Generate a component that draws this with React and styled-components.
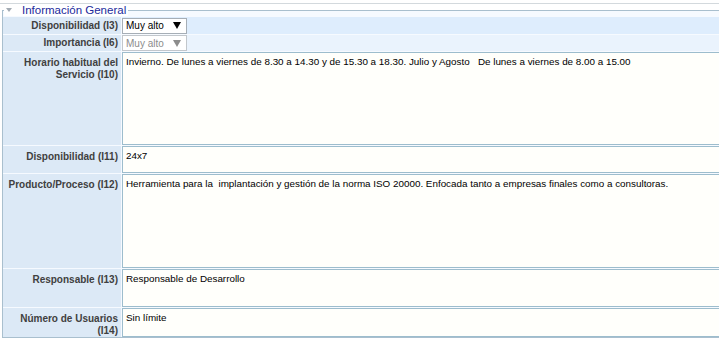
import React from 'react';
import styled, { createGlobalStyle } from 'styled-components';

const GlobalStyle = createGlobalStyle`
  html, body {
    margin: 0;
    padding: 0;
    background: #fff;
    overflow: hidden;
  }
  body {
    font-family: "Liberation Sans", Arial, sans-serif;
  }
`;

const Page = styled.div`
  width: 800px;
  margin-top: 3px;
  border-top: 1px solid #d3d9dd;
`;

const Fieldset = styled.fieldset`
  margin: 0 0 0 2px;
  padding: 1px 0 0 0;
  border: 1px solid #a9bfce;
  background: #f6faff;
  min-width: 0;
`;

const Legend = styled.legend`
  margin-left: 1px;
  padding: 0 2px;
  font-size: 11.5px;
  line-height: 12px;
  color: #1c2a9c;
  background: #fff;
`;

const Caret = styled.span`
  display: inline-block;
  width: 0;
  height: 0;
  border-left: 3px solid transparent;
  border-right: 3px solid transparent;
  border-top: 4px solid #a3abb3;
  margin: 0 10px 1px 0;
  vertical-align: middle;
`;

const Form = styled.div`
  display: grid;
  grid-template-columns: 118px 1fr;
  column-gap: 1px;
  row-gap: 1px;
`;

const Label = styled.div`
  background: #dce9f6;
  color: #404040;
  font-weight: bold;
  font-size: 10px;
  line-height: 12px;
  text-align: right;
  padding: ${(p) => (p.$center ? '0 3px' : '5px 3px 0 3px')};
  display: flex;
  flex-direction: column;
  justify-content: ${(p) => (p.$center ? 'center' : 'flex-start')};
`;

const Cell = styled.div`
  background: ${(p) => p.$bg || 'transparent'};
  height: ${(p) => p.$h}px;
  display: flex;
  align-items: center;
`;

const Select = styled.div`
  box-sizing: border-box;
  width: 65px;
  height: 16px;
  border: 1px solid ${(p) => (p.$disabled ? '#c2c7cc' : '#a6aeb6')};
  background: #fff;
  display: flex;
  align-items: center;
  justify-content: space-between;
  padding: 0 5px 0 3px;
  font-size: 10px;
  color: ${(p) => (p.$disabled ? '#8c8c8c' : '#000')};
`;

const Field = styled.textarea`
  display: block;
  box-sizing: border-box;
  width: 100%;
  height: ${(p) => p.$h}px;
  margin: 0;
  border: 1px solid #9dbdcd;
  border-radius: 0;
  background: #fffffb;
  font-family: "Liberation Sans", Arial, sans-serif;
  font-size: 9.85px;
  line-height: 13px;
  padding: 2px 3px;
  color: #000;
  resize: none;
  overflow: hidden;
  outline: none;
`;

const Arrow = ({ color }) => (
  <svg width="8" height="7" viewBox="0 0 8 7">
    <path d="M0 0 H8 L4 7 Z" fill={color} />
  </svg>
);

const fields = [
  {
    label: 'Horario habitual del Servicio (I10)',
    h: 93,
    value:
      'Invierno. De lunes a viernes de 8.30 a 14.30 y de 15.30 a 18.30. Julio y Agosto   De lunes a viernes de 8.00 a 15.00',
  },
  { label: 'Disponibilidad (I11)', h: 27, value: '24x7' },
  {
    label: 'Producto/Proceso (I12)',
    h: 94,
    value:
      'Herramienta para la  implantación y gestión de la norma ISO 20000. Enfocada tanto a empresas finales como a consultoras.',
  },
  { label: 'Responsable (I13)', h: 38, value: 'Responsable de Desarrollo' },
  { label: 'Número de Usuarios (I14)', h: 29, value: 'Sin límite' },
];

export default function App() {
  return (
    <>
      <GlobalStyle />
      <Page>
        <Fieldset>
          <Legend>
            <Caret />
            Información General
          </Legend>
          <Form>
            <Label $center>Disponibilidad (I3)</Label>
            <Cell $bg="#deedfd" $h={17}>
              <Select>
                Muy alto
                <Arrow color="#000" />
              </Select>
            </Cell>
            <Label $center>Importancia (I6)</Label>
            <Cell $bg="#eaf3fd" $h={16}>
              <Select $disabled>
                Muy alto
                <Arrow color="#8c8c8c" />
              </Select>
            </Cell>
            {fields.map((f) => (
              <React.Fragment key={f.label}>
                <Label>{f.label}</Label>
                <Field $h={f.h} readOnly defaultValue={f.value} />
              </React.Fragment>
            ))}
          </Form>
        </Fieldset>
      </Page>
    </>
  );
}
